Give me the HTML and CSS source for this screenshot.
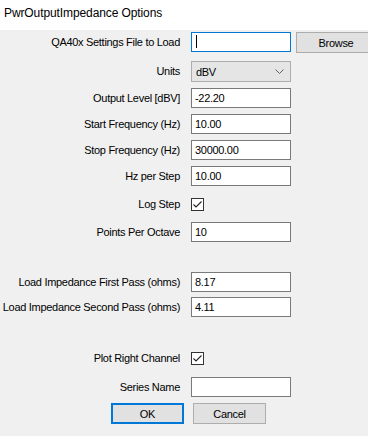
FILE: index.html
```html
<!DOCTYPE html>
<html lang="en">
<head>
    <meta charset="UTF-8">
    <title>PwrOutputImpedance Options</title>
    <link rel="stylesheet" href="styles.css">
</head>
<body>
    <div class="title-bar">PwrOutputImpedance Options</div>
    <div class="dialog">
        <div class="form-grid">
            <label class="field-label">QA40x Settings File to Load</label>
            <div class="field">
                <span class="text-box focused"><span class="caret"></span></span>
                <span class="btn btn-browse">Browse</span>
            </div>

            <label class="field-label">Units</label>
            <div class="field">
                <span class="combo">dBV
                    <svg class="chevron" width="9" height="5" viewBox="0 0 9 5"><path d="M0.5 0.5 L4.5 4.5 L8.5 0.5" fill="none" stroke="#606060" stroke-width="1"/></svg>
                </span>
            </div>

            <label class="field-label">Output Level [dBV]</label>
            <div class="field"><span class="text-box">-22.20</span></div>

            <label class="field-label">Start Frequency (Hz)</label>
            <div class="field"><span class="text-box">10.00</span></div>

            <label class="field-label">Stop Frequency (Hz)</label>
            <div class="field"><span class="text-box">30000.00</span></div>

            <label class="field-label">Hz per Step</label>
            <div class="field"><span class="text-box">10.00</span></div>

            <label class="field-label check-label">Log Step</label>
            <div class="field">
                <span class="check-box">
                    <svg width="11" height="11" viewBox="0 0 11 11"><path d="M1.5 5.5 L4 8 L9.5 2.5" fill="none" stroke="#222" stroke-width="1.1"/></svg>
                </span>
            </div>

            <label class="field-label">Points Per Octave</label>
            <div class="field"><span class="text-box">10</span></div>

            <label class="field-label">Load Impedance First Pass (ohms)</label>
            <div class="field"><span class="text-box">8.17</span></div>

            <label class="field-label">Load Impedance Second Pass (ohms)</label>
            <div class="field"><span class="text-box">4.11</span></div>

            <label class="field-label check-label">Plot Right Channel</label>
            <div class="field">
                <span class="check-box">
                    <svg width="11" height="11" viewBox="0 0 11 11"><path d="M1.5 5.5 L4 8 L9.5 2.5" fill="none" stroke="#222" stroke-width="1.1"/></svg>
                </span>
            </div>

            <label class="field-label">Series Name</label>
            <div class="field"><span class="text-box"></span></div>
        </div>
        <div class="button-row">
            <span class="btn btn-ok">OK</span>
            <span class="btn btn-cancel">Cancel</span>
        </div>
    </div>
</body>
</html>
```

FILE: styles.css
```css
html, body{
    margin: 0;
    padding: 0;
}
body{
    width: 368px;
    height: 436px;
    overflow: hidden;
    background-color: #f0f0f0;
    font-family: "Liberation Sans", Arial, sans-serif;
    font-size: 11px;
    letter-spacing: -0.3px;
    color: #000;
}
.title-bar{
    height: 30px;
    line-height: 27px;
    padding-left: 4px;
    background-color: #fff;
    font-size: 12px;
    letter-spacing: -0.1px;
}
.dialog{
    padding-top: 2px;
}
.form-grid{
    display: grid;
    grid-template-columns: 180px 1fr;
    column-gap: 11px;
    grid-template-rows: 29px 27px 26px 26px 26px 31px 25px 50px 25px 54px 26px 26px;
}
.field-label{
    text-align: right;
    line-height: 20px;
    height: 20px;
    white-space: nowrap;
}
.check-label{
    line-height: 14px;
}
.field{
    display: flex;
    align-items: flex-start;
    gap: 5px;
}
.text-box{
    box-sizing: border-box;
    display: block;
    width: 100px;
    height: 20px;
    line-height: 18px;
    padding-left: 3px;
    background-color: #fff;
    border: 1px solid #7a7a7a;
}
.text-box.focused{
    border-color: #0078d7;
}
.caret{
    display: inline-block;
    width: 1px;
    height: 13px;
    margin-left: 1px;
    margin-top: 2px;
    vertical-align: top;
    background-color: #000;
}
.combo{
    box-sizing: border-box;
    display: flex;
    align-items: center;
    justify-content: space-between;
    width: 100px;
    height: 21px;
    padding: 0 6px 0 4px;
    background-color: #e5e5e5;
    border: 1px solid #adadad;
}
.check-box{
    box-sizing: border-box;
    display: flex;
    align-items: center;
    justify-content: center;
    width: 13px;
    height: 13px;
    margin-top: 1px;
    background-color: #fff;
    border: 1px solid #333;
}
.btn{
    box-sizing: border-box;
    display: flex;
    align-items: center;
    justify-content: center;
    height: 21px;
    background-color: #e1e1e1;
    border: 1px solid #adadad;
}
.btn-browse{
    width: 80px;
}
.button-row{
    display: flex;
    gap: 9px;
    padding-left: 111px;
}
.btn-ok{
    width: 73px;
    border: 2px solid #0078d7;
}
.btn-cancel{
    width: 73px;
}
```
